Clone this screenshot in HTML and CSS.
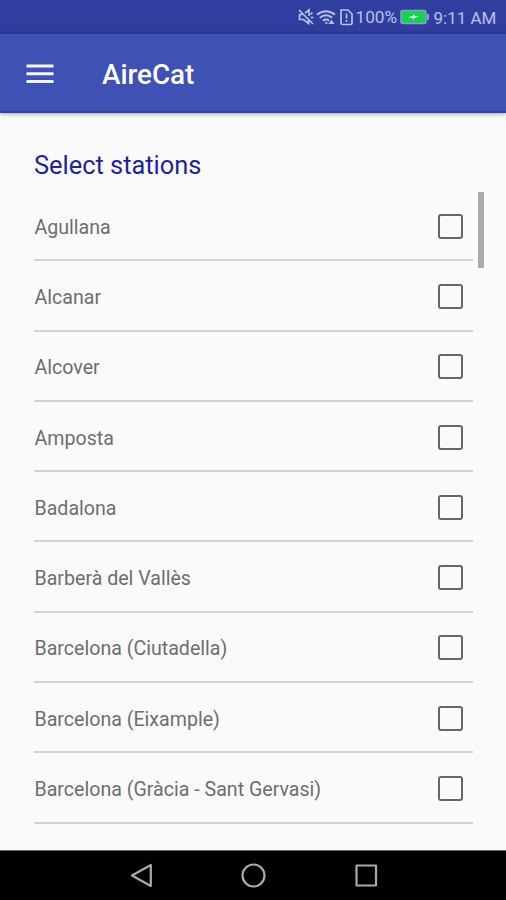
FILE: index.html
```html
<!DOCTYPE html>
<html lang="en">
<head>
<meta charset="utf-8">
<title>AireCat</title>
<link rel="stylesheet" href="styles.css">
</head>
<body>
<div class="status">
  <svg class="status-icons" width="56" height="18" viewBox="0 0 56 18" fill="none" stroke="#b9c0ea" stroke-width="1.7">
    <path d="M1 2l14 14M5.500 6.500H1.500v5h4l5 4v-4M7 5l4-3v6M12.500 6.500l2-2M12.500 9.500h3"/>
    <path d="M19 6.800q9-7 18 0M21.800 9.800q6.200-5 12.400 0M24.800 12.800q3.200-2.500 6.400 0" stroke-width="2"/>
    <path d="M27 15h2.500M32 15.200l1.500-2 1.500 2z"/>
    <path d="M43 2h7l4 4v9a1.500 1.500 0 0 1-1.500 1.500h-8a1.500 1.500 0 0 1-1.500-1.500z"/>
    <path d="M48.500 5.500v5M48.500 12v2"/>
  </svg>
  <span class="percent">100%</span>
  <svg class="battery" width="30" height="16" viewBox="0 0 30 16">
    <rect x="1" y="1.500" width="25" height="13" rx="2" fill="#10d34e" stroke="#909bd0" stroke-width="1.600"/>
    <path d="M27 5h2v6h-2z" fill="#909bd0"/>
    <path d="M8 8.200l5-1.200V5l2 2 4 .5-5 1.500v2l-2-2z" fill="#e4ffe9"/>
  </svg>
  <span class="clock">9:11 AM</span>
</div>
<header class="appbar">
  <svg width="28" height="22" viewBox="0 0 28 22" fill="#f4f5fc"><path d="M.5 1.500h27v3H.5zM.5 9.300h27v3H.5zM.5 17h27v3H.5z"/></svg>
  <h1>AireCat</h1>
</header>
<main>
  <h2>Select stations</h2>
  <div class="scroller">
    <ul class="list">
      <li><span>Agullana</span><i class="box"></i></li>
      <li><span>Alcanar</span><i class="box"></i></li>
      <li><span>Alcover</span><i class="box"></i></li>
      <li><span>Amposta</span><i class="box"></i></li>
      <li><span>Badalona</span><i class="box"></i></li>
      <li><span>Barberà del Vallès</span><i class="box"></i></li>
      <li><span>Barcelona (Ciutadella)</span><i class="box"></i></li>
      <li><span>Barcelona (Eixample)</span><i class="box"></i></li>
      <li><span>Barcelona (Gràcia - Sant Gervasi)</span><i class="box"></i></li>
    </ul>
    <div class="thumb"></div>
  </div>
</main>
<nav class="navbar">
  <svg width="26" height="26" viewBox="0 0 26 26"><path d="M4 12.500L22.800 2v21z"/></svg>
  <svg width="26" height="26" viewBox="0 0 26 26"><circle cx="13.500" cy="12.500" r="11"/></svg>
  <svg width="26" height="26" viewBox="0 0 26 26"><path d="M3.500 2.500h19.500v20h-19.500z"/></svg>
</nav>
</body>
</html>
```
FILE: styles.css
```css
* { box-sizing: border-box; }
body {
  margin: 0;
  width: 506px;
  height: 900px;
  overflow: hidden;
  display: flex;
  flex-direction: column;
  background: #fafafa;
  font-family: Roboto, "Liberation Sans", sans-serif;
}
h1, h2, ul { margin: 0; padding: 0; font-weight: 400; }
.status {
  height: 34px;
  flex: none;
  display: flex;
  align-items: center;
  padding-left: 298px;
  background: linear-gradient(#303f9f 30px, #2b388f 34px);
  color: #b9c0ea;
  white-space: nowrap;
}
.status-icons { flex: none; }
.percent { width: 41px; margin-left: 1.5px; font-size: 17.2px; }
.battery { flex: none; margin-left: 3px; }
.clock { margin-left: 4px; padding-top: 2px; font-size: 17px; }
.appbar {
  height: 79px;
  flex: none;
  display: flex;
  align-items: center;
  padding: 2px 0 0 26px;
  background: #3f51b5;
  border-bottom: 2px solid #2b44a8;
  box-shadow: 0 1px 4px rgba(0, 0, 0, .35);
  color: #fff;
}
.appbar h1 { margin-left: 48px; font-size: 27.8px; font-weight: 500; line-height: 32px; padding-top: 2px; }
main { flex: 1; min-height: 0; padding: 36px 22px 0 34px; }
h2 { height: 42px; line-height: 32px; font-size: 25.4px; color: #1a259b; }
.scroller { display: flex; justify-content: space-between; }
.list { width: 439px; list-style: none; }
.list li {
  height: 70.3px;
  display: flex;
  align-items: center;
  justify-content: space-between;
  padding: 4px 10px 0 .5px;
  border-bottom: 2px solid #d2d2d2;
  color: #6e6e6e;
  font-size: 19.6px;
}
.box { width: 25px; height: 25px; margin-bottom: 2px; border: 2px solid #666; border-radius: 3px; }
.thumb { width: 6px; height: 76px; margin-top: 1px; background: #aaa; }
.navbar {
  height: 50px;
  flex: none;
  display: flex;
  align-items: center;
  justify-content: center;
  gap: 86.500px;
  border-top: 1px solid #666;
  background: #000;
}
.navbar svg { fill: none; stroke: #aaa; stroke-width: 2.2; stroke-linejoin: round; }
```
